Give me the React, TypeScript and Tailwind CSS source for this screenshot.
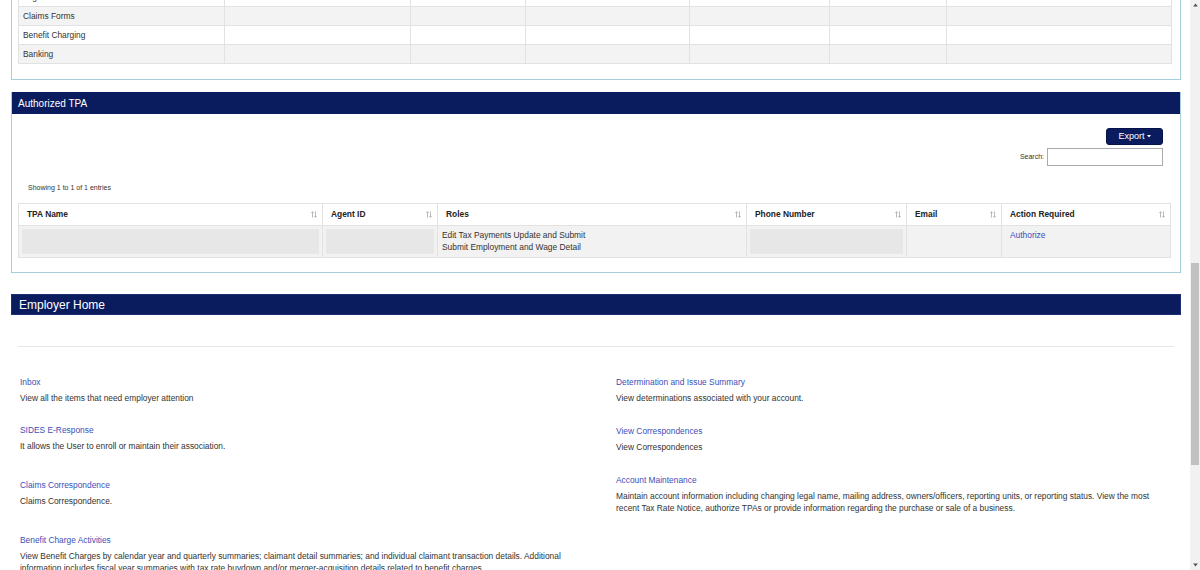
import React from 'react';

const NAVY = 'bg-[#0b1c5e]';
const LINK = 'text-[#3b4fb8]';

const topRows = ['Legal', 'Claims Forms', 'Benefit Charging', 'Banking'];
const topCols = ['w-[206px]', 'w-[186px]', 'w-[115px]', 'w-[164px]', 'w-[140px]', 'w-[117px]', ''];

const tpaCols = [
  { label: 'TPA Name', w: 'w-[304px]' },
  { label: 'Agent ID', w: 'w-[115px]' },
  { label: 'Roles', w: 'w-[309px]' },
  { label: 'Phone Number', w: 'w-[160px]' },
  { label: 'Email', w: 'w-[95px]' },
  { label: 'Action Required', w: '' },
];

const leftLinks = [
  { title: 'Inbox', text: 'View all the items that need employer attention', mb: 'mb-[20px]' },
  { title: 'SIDES E-Response', text: 'It allows the User to enroll or maintain their association.', mb: 'mb-[27px]' },
  { title: 'Claims Correspondence', text: 'Claims Correspondence.', mb: 'mb-[27px]' },
  {
    title: 'Benefit Charge Activities',
    text: 'View Benefit Charges by calendar year and quarterly summaries; claimant detail summaries; and individual claimant transaction details. Additional information includes fiscal year summaries with tax rate buydown and/or merger-acquisition details related to benefit charges.',
    mb: 'mb-[20px]',
  },
];

const rightLinks = [
  { title: 'Determination and Issue Summary', text: 'View determinations associated with your account.', mb: 'mb-[21px]' },
  { title: 'View Correspondences', text: 'View Correspondences', mb: 'mb-[21px]' },
  {
    title: 'Account Maintenance',
    text: 'Maintain account information including changing legal name, mailing address, owners/officers, reporting units, or reporting status. View the most recent Tax Rate Notice, authorize TPAs or provide information regarding the purchase or sale of a business.',
    mb: 'mb-[20px]',
  },
];

function SortIcon() {
  return (
    <svg width="6" height="7" viewBox="0 0 6 7" aria-hidden="true" className="shrink-0">
      <path
        d="M1.5 6.6V0.8M0.4 2L1.5 0.7L2.6 2M4.5 0.4V6.2M3.4 5L4.5 6.3L5.6 5"
        stroke="#a9a9a9"
        strokeWidth="0.8"
        fill="none"
      />
    </svg>
  );
}

function LinkItem({ title, text, mb }: { title: string; text: string; mb: string }) {
  return (
    <div className={mb}>
      <a href="#" className={`block ${LINK} text-[8.4px] leading-[12px]`}>
        {title}
      </a>
      <p className="mt-[4px] text-[8.4px] leading-[12px] text-[#333]">{text}</p>
    </div>
  );
}

function Scrollbar() {
  return (
    <div className="flex w-[10px] shrink-0 flex-col bg-[#f1f1f1]">
      <div className="flex h-[10px] items-center justify-center">
        <svg width="5" height="4" viewBox="0 0 5 4"><path d="M2.5 0.5L4.8 3.5H0.2Z" fill="#505050" /></svg>
      </div>
      <div className="h-[253px]" />
      <div className="mx-auto h-[202px] w-[8px] bg-[#c1c1c1]" />
      <div className="flex-1" />
      <div className="flex h-[10px] items-center justify-center">
        <svg width="5" height="4" viewBox="0 0 5 4"><path d="M2.5 3.5L4.8 0.5H0.2Z" fill="#505050" /></svg>
      </div>
    </div>
  );
}

export default function App() {
  return (
    <div className="flex h-[570px] overflow-hidden bg-white font-['Liberation_Sans',Arial,sans-serif] text-[#333]">
      <div className="min-w-0 flex-1 pl-[11px] pr-[9px]">
        {/* previous panel, scrolled partly out of view */}
        <div className="border border-t-0 border-[#a6cfdc] pl-[6px] pr-[8px] pb-[15px]">
          <table className="-mt-[13px] w-full table-fixed border-collapse border border-[#e2e2e2] text-[8.4px]">
            <colgroup>
              {topCols.map((c, i) => (
                <col key={i} className={c} />
              ))}
            </colgroup>
            <tbody>
              {topRows.map((r, i) => (
                <tr key={r} className={i % 2 === 1 ? 'bg-[#f3f3f3]' : 'bg-white'}>
                  {topCols.map((_, j) => (
                    <td key={j} className="h-[19px] border border-[#e2e2e2] px-[4px] py-0 leading-[12px]">
                      {j === 0 ? r : ''}
                    </td>
                  ))}
                </tr>
              ))}
            </tbody>
          </table>
        </div>

        {/* Authorized TPA */}
        <div className="mt-[12px] border border-t-0 border-[#a6cfdc]">
          <div className={`${NAVY} flex h-[22px] items-center px-[6px] text-[10px] text-white`}>Authorized TPA</div>
          <div className="pl-[6px] pr-[9px] pt-[14px] pb-[14px]">
            <div className="mr-[8px] flex flex-col items-end">
              <button
                type="button"
                className={`${NAVY} flex h-[17px] w-[57px] items-center justify-center gap-[2px] rounded-[3px] border border-[#06124a] text-[9px] text-white`}
              >
                Export
                <svg width="4" height="3" viewBox="0 0 4 3"><path d="M0 0H4L2 2.6Z" fill="#fff" /></svg>
              </button>
              <label className="mt-[3px] flex items-center text-[7px]">
                Search:
                <input className="ml-[3px] h-[18px] w-[116px] border border-[#aaa] bg-white outline-none" />
              </label>
            </div>
            <div className="mt-[17px] pl-[10px] text-[7px] leading-[10px]">Showing 1 to 1 of 1 entries</div>
            <table className="mt-[10px] w-full table-fixed border-collapse border border-[#e2e2e2] text-[8.4px]">
              <colgroup>
                {tpaCols.map((c) => (
                  <col key={c.label} className={c.w} />
                ))}
              </colgroup>
              <thead>
                <tr className="bg-white">
                  {tpaCols.map((c) => (
                    <th key={c.label} className="h-[22px] border border-[#e2e2e2] pl-[8px] pr-[5px] text-left font-bold text-[#222]">
                      <div className="flex items-center justify-between">
                        <span>{c.label}</span>
                        <SortIcon />
                      </div>
                    </th>
                  ))}
                </tr>
              </thead>
              <tbody>
                <tr className="bg-[#f2f2f2]">
                  <td className="h-[31px] border border-[#e2e2e2] p-[3px]">
                    <div className="h-[25px] w-full bg-[#e7e7e7]" />
                  </td>
                  <td className="border border-[#e2e2e2] p-[3px]">
                    <div className="h-[25px] w-full bg-[#e7e7e7]" />
                  </td>
                  <td className="border border-[#e2e2e2] px-[4px] pt-[3px] align-top leading-[12px]">
                    Edit Tax Payments Update and Submit
                    <br />
                    Submit Employment and Wage Detail
                  </td>
                  <td className="border border-[#e2e2e2] p-[3px]">
                    <div className="h-[25px] w-full bg-[#e7e7e7]" />
                  </td>
                  <td className="border border-[#e2e2e2]" />
                  <td className="border border-[#e2e2e2] px-[8px] pt-[3px] align-top leading-[12px]">
                    <a href="#" className={LINK}>
                      Authorize
                    </a>
                  </td>
                </tr>
              </tbody>
            </table>
          </div>
        </div>

        {/* Employer Home */}
        <div className={`${NAVY} mt-[21px] flex h-[21px] items-center border border-[#1d2f73] px-[7px] text-[12px] text-white`}>
          Employer Home
        </div>
        <div className="mx-[7px] mt-[31px] border-t border-[#e6e6e6]" />
        <div className="mt-[29px] grid grid-cols-[576px_550px] gap-x-[20px] pl-[9px]">
          <div>
            {leftLinks.map((l) => (
              <LinkItem key={l.title} {...l} />
            ))}
          </div>
          <div>
            {rightLinks.map((l) => (
              <LinkItem key={l.title} {...l} />
            ))}
          </div>
        </div>
      </div>
      <Scrollbar />
    </div>
  );
}
